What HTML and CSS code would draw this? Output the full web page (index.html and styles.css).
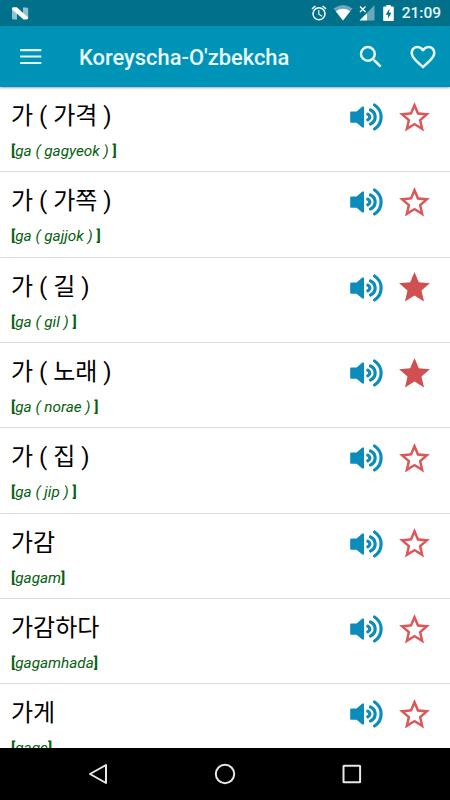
FILE: index.html
```
<!DOCTYPE html>
<html lang="uz">
    <head>
        <meta charset="UTF-8">
        <meta name="viewport" content="width=device-width, initial-scale=1.0"/>
        <title>Koreyscha-O'zbekcha</title>
        <link rel="stylesheet" href="styles.css">
    </head>
    <body>
        <svg class="hidden">
            <symbol id="speaker" viewBox="0 0 34 30">
                <path fill="currentColor" d="M2 9.600h5.600L13.300 4.500h1.200q.5 0 .5.600v19.800q0 .6-.5.600h-1.200L7.600 20.800H2q-.8 0-.8-.8v-9.600q0-.8.8-.8z"/>
                <g fill="none" stroke="currentColor" stroke-width="3.2" stroke-linecap="round">
                    <path d="M18.800 12.200q4.200 2.800 0 5.600"/>
                    <path d="M21.500 8a7.600 7.600 0 0 1 0 14"/>
                    <path d="M25.500 3a14.200 14.200 0 0 1 0 24"/>
                </g>
            </symbol>
            <symbol id="star" viewBox="0 0 24 24">
                <path fill="currentColor" d="M12 17.27L18.18 21l-1.64-7.03L22 9.24l-7.19-.61L12 2 9.19 8.63 2 9.24l5.46 4.73L5.82 21z"/>
            </symbol>
            <symbol id="star-outline" viewBox="0 0 24 24">
                <path fill="currentColor" d="M22 9.24l-7.19-.62L12 2 9.19 8.63 2 9.24l5.46 4.73L5.82 21 12 17.27 18.18 21l-1.63-7.03L22 9.24zM12 15.4l-3.76 2.27 1-4.28-3.32-2.88 4.38-.38L12 6.1l1.71 4.04 4.38.38-3.32 2.88 1 4.28L12 15.4z"/>
            </symbol>
        </svg>

        <div class="status-bar">
            <svg class="notification" width="17" height="13" viewBox="0 0 17 13">
                <path fill="#8fc3cf" d="M0 1l5 4v7.500H1.500Q0 12.500 0 11zM11 .5h3.500Q16.200.5 16.200 2v9.500L11 8z"/>
                <path fill="#fff" d="M0 1.500Q0 .3 1.500.3h3.300l11.400 10.200q0 2-1.500 2h-3.200L0 2.300z"/>
            </svg>
            <svg class="alarm" width="18" height="18" viewBox="0 0 24 24">
                <path fill="#fff" d="M22 5.72l-4.6-3.86-1.29 1.53 4.6 3.86L22 5.72zM7.88 3.39L6.6 1.86 2 5.71l1.29 1.53 4.59-3.85zM12.500 8H11v6l4.750 2.850.750-1.230-4-2.370V8zM12 4a9 9 0 1 0 0 18 9 9 0 0 0 0-18zm0 16a7 7 0 1 1 0-14 7 7 0 0 1 0 14z"/>
            </svg>
            <svg class="wifi" width="20" height="16" viewBox="0 0 20 16">
                <path fill="#6aa9bb" d="M.5 3.500Q10-3.500 19.500 3.500L10 15.500z"/>
                <path fill="#fff" d="M2.800 6.200Q10 1.500 17.200 6.200L10 15.500z"/>
            </svg>
            <svg class="signal" width="16" height="16" viewBox="0 0 16 16">
                <path fill="#6aa9bb" d="M15.500 0v15.500H8V8z"/>
                <path fill="#fff" d="M8 8v7.500H.5z"/>
                <path stroke="#fff" stroke-width="1.300" d="M1 1.500l5.500 5.500M6.500 1.500L1 7"/>
            </svg>
            <svg class="battery" width="11" height="16" viewBox="0 0 11 16">
                <path fill="#fff" d="M3.300 0h4.400v1.600H10q.8 0 .8.8v12.800q0 .8-.8.8H1q-.8 0-.8-.8V2.400q0-.8.8-.8h2.300z"/>
                <path fill="#00708b" d="M6.300 3.800L2.800 9.700H5v4l3.300-6H6.200z"/>
            </svg>
            <span class="clock">21:09</span>
        </div>

        <header class="toolbar">
            <svg class="toolbar-icon" viewBox="0 0 24 24">
                <path fill="#dff5fa" d="M3.300 17.600h17v-1.700h-17v1.700zm0-5.150h17v-1.700h-17v1.700zm0-6.850v1.700h17V5.600h-17z"/>
            </svg>
            <h1 class="title">Koreyscha-O'zbekcha</h1>
            <svg class="toolbar-icon search" viewBox="0 0 24 24">
                <path fill="#e8f9fd" d="M15.500 14h-.79l-.28-.27A6.471 6.471 0 0 0 16 9.500 6.500 6.500 0 1 0 9.500 16c1.610 0 3.090-.59 4.230-1.570l.27.28v.79l5 4.990L20.490 19l-4.990-5zm-6 0a4.500 4.500 0 1 1 0-9 4.500 4.500 0 0 1 0 9z"/>
            </svg>
            <svg class="toolbar-icon" viewBox="0 0 24 24">
                <path fill="#e8f9fd" d="M16.500 3c-1.740 0-3.410.81-4.500 2.090C10.910 3.810 9.240 3 7.500 3 4.420 3 2 5.420 2 8.500c0 3.780 3.400 6.860 8.550 11.540L12 21.350l1.450-1.320C18.600 15.360 22 12.280 22 8.500 22 5.420 19.580 3 16.500 3zm-4.400 15.550l-.1.100-.1-.1C7.140 14.240 4 11.390 4 8.500 4 6.500 5.500 5 7.500 5c1.540 0 3.040.99 3.570 2.360h1.870C13.460 5.990 14.960 5 16.500 5c2 0 3.500 1.500 3.500 3.500 0 2.890-3.140 5.740-7.900 10.050z"/>
            </svg>
        </header>

        <main class="words">
            <div class="row">
                <div class="text">
                    <div class="word">가 ( 가격 )</div>
                    <div class="reading"><b>[</b><i>ga ( gagyeok ) </i><b>]</b></div>
                </div>
                <svg class="speaker"><use href="#speaker"/></svg>
                <svg class="star"><use href="#star-outline"/></svg>
            </div>
            <div class="row">
                <div class="text">
                    <div class="word">가 ( 가쪽 )</div>
                    <div class="reading"><b>[</b><i>ga ( gajjok ) </i><b>]</b></div>
                </div>
                <svg class="speaker"><use href="#speaker"/></svg>
                <svg class="star"><use href="#star-outline"/></svg>
            </div>
            <div class="row">
                <div class="text">
                    <div class="word">가 ( 길 )</div>
                    <div class="reading"><b>[</b><i>ga ( gil ) </i><b>]</b></div>
                </div>
                <svg class="speaker"><use href="#speaker"/></svg>
                <svg class="star active"><use href="#star"/></svg>
            </div>
            <div class="row">
                <div class="text">
                    <div class="word">가 ( 노래 )</div>
                    <div class="reading"><b>[</b><i>ga ( norae ) </i><b>]</b></div>
                </div>
                <svg class="speaker"><use href="#speaker"/></svg>
                <svg class="star active"><use href="#star"/></svg>
            </div>
            <div class="row">
                <div class="text">
                    <div class="word">가 ( 집 )</div>
                    <div class="reading"><b>[</b><i>ga ( jip ) </i><b>]</b></div>
                </div>
                <svg class="speaker"><use href="#speaker"/></svg>
                <svg class="star"><use href="#star-outline"/></svg>
            </div>
            <div class="row">
                <div class="text">
                    <div class="word">가감</div>
                    <div class="reading"><b>[</b><i>gagam</i><b>]</b></div>
                </div>
                <svg class="speaker"><use href="#speaker"/></svg>
                <svg class="star"><use href="#star-outline"/></svg>
            </div>
            <div class="row">
                <div class="text">
                    <div class="word">가감하다</div>
                    <div class="reading"><b>[</b><i>gagamhada</i><b>]</b></div>
                </div>
                <svg class="speaker"><use href="#speaker"/></svg>
                <svg class="star"><use href="#star-outline"/></svg>
            </div>
            <div class="row">
                <div class="text">
                    <div class="word">가게</div>
                    <div class="reading"><b>[</b><i>gage</i><b>]</b></div>
                </div>
                <svg class="speaker"><use href="#speaker"/></svg>
                <svg class="star"><use href="#star-outline"/></svg>
            </div>
        </main>

        <nav class="nav-bar">
            <svg width="22" height="22" viewBox="0 0 22 22">
                <path d="M19 2v18L3 11z"/>
            </svg>
            <svg width="22" height="22" viewBox="0 0 22 22">
                <circle cx="11" cy="11" r="9.200"/>
            </svg>
            <svg width="22" height="22" viewBox="0 0 22 22">
                <rect x="2.500" y="2.700" width="16.600" height="16.600" rx=".5"/>
            </svg>
        </nav>
    </body>
</html>
```
FILE: styles.css
```
*
{
    box-sizing: border-box;
}

body
{
    display: flex;
    flex-direction: column;
    height: 800px;
    margin: 0;
    overflow: hidden;
    background: #fff;
    font-family: Roboto, "Noto Sans CJK KR", sans-serif;
}

svg
{
    display: block;
    flex: none;
}

.hidden
{
    display: none;
}

/* system status bar */
.status-bar
{
    display: flex;
    flex: none;
    align-items: center;
    height: 26px;
    padding: 0 9px 0 12px;
    background: #00708b;
    color: #e6f6f9;
}

.notification
{
    margin-right: auto;
}

.wifi
{
    margin-left: 5px;
}

.signal
{
    margin-left: 6px;
}

.battery
{
    margin-left: 8px;
}

.clock
{
    width: 40px;
    margin-left: 7px;
    font-size: 15.5px;
    font-weight: 500;
    line-height: 28px;
    text-align: right;
    white-space: nowrap;
}

.toolbar
{
    display: flex;
    flex: none;
    align-items: center;
    height: 61px;
    padding: 0 12px 0 16px;
    background: #0093b8;
    box-shadow: 0 1px 2px rgba(0, 0, 0, 0.35);
    z-index: 1;
}

.toolbar-icon
{
    width: 30px;
    height: 30px;
}

.title
{
    flex: 1;
    margin: 1px 0 0 33px;
    color: #e8f9fd;
    font-size: 21.9px;
    font-weight: 500;
    white-space: nowrap;
}

.search
{
    margin-right: 22px;
}

/* word list */
.words
{
    flex: 1;
    min-height: 0;
    overflow: hidden;
}

.row
{
    display: flex;
    height: 85.35px;
    padding: 0 17px 0 11px;
    border-bottom: 1px solid #dcdcdc;
}

.text
{
    flex: 1;
    padding-top: 12px;
}

.word
{
    height: 34px;
    color: #000;
    font-size: 24px;
    line-height: 34px;
}

.reading
{
    margin-top: 8px;
    color: #06600f;
    font-size: 15.3px;
    line-height: 20px;
    white-space: pre;
}

.speaker
{
    width: 34px;
    height: 30px;
    margin: 15px 13px 0 0;
    color: #0b8cba;
}

.star
{
    width: 37px;
    height: 37px;
    margin-top: 11.5px;
    color: #dd5658;
}

.active
{
    color: #d05052;
}

/* system navigation */
.nav-bar
{
    display: flex;
    flex: none;
    align-items: center;
    justify-content: center;
    gap: 105px;
    height: 52px;
    background: #000;
}

.nav-bar svg
{
    fill: none;
    stroke: #e8e8e8;
    stroke-width: 2;
    stroke-linejoin: round;
}
```
